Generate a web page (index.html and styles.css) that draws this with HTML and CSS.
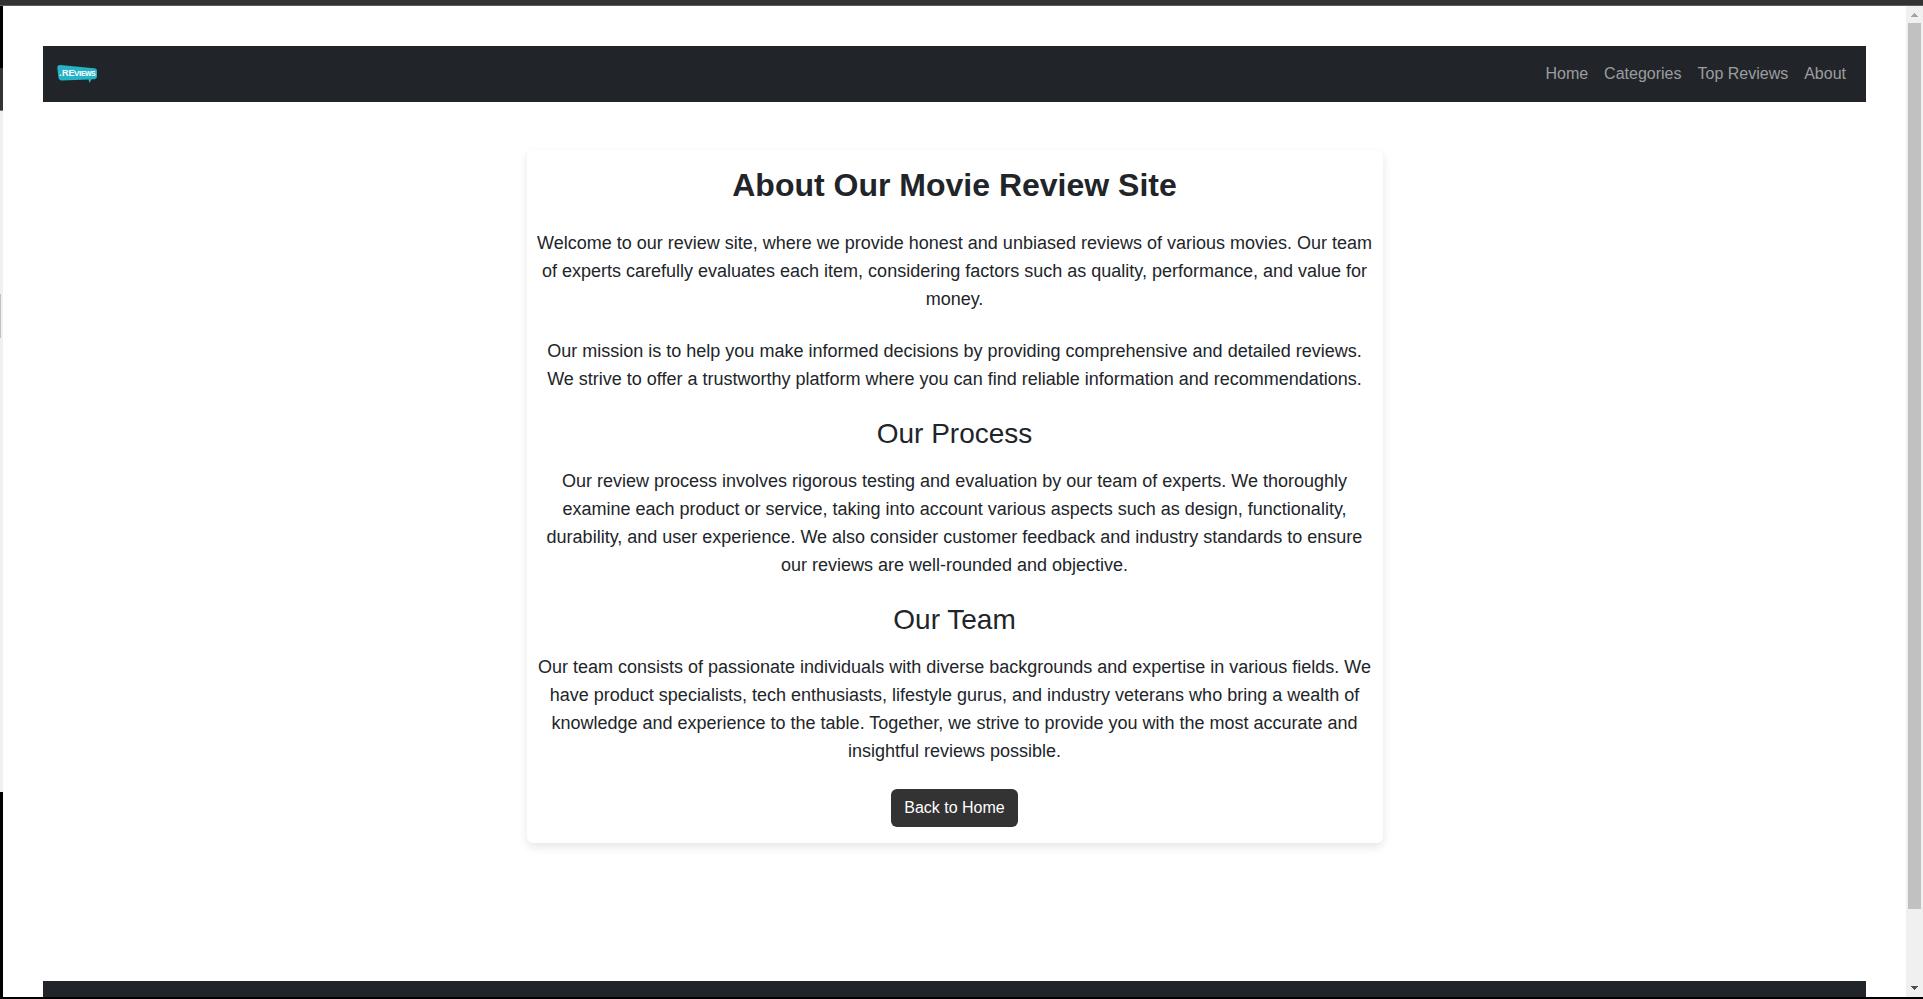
FILE: index.html
```html
<!DOCTYPE html>
<html lang="en">
<head>
<meta charset="utf-8">
<title>About - Movie Reviews</title>
<link rel="stylesheet" href="styles.css">
</head>
<body>
<div class="frame-top"></div>
<div class="window">
  <div class="frame-left"></div>
  <div class="page">
    <nav class="navbar" aria-label="Main">
      <a class="brand" href="#" aria-label="Reviews home">
        <svg width="40" height="20" viewBox="0 0 40 20" aria-hidden="true">
          <path fill="#26b3c7" d="M3 1 37 4.200Q40 4.500 40 7V12Q40 15 37 15.200L34.500 15.300 32.500 19 31.500 15.400 5 16.400Q2 16.500 1.500 13.500L.3 4Q.2 1 3 1Z"/>
          <g fill="#fff" font-family="Liberation Sans, Arial, sans-serif" font-weight="700">
            <text x="2" y="12" font-size="9">.</text>
            <text x="5" y="12" font-size="9">RE</text>
            <text x="17" y="12" font-size="8">V</text>
            <text x="22" y="12" font-size="8">I</text>
            <text x="24" y="12" font-size="7">E</text>
            <text x="28" y="12" font-size="7">W</text>
            <text x="34" y="12" font-size="7">S</text>
          </g>
        </svg>
      </a>
      <ul class="nav-links">
        <li><a href="#">Home</a></li>
        <li><a href="#">Categories</a></li>
        <li><a href="#">Top Reviews</a></li>
        <li><a href="#">About</a></li>
      </ul>
    </nav>
    <main class="card">
      <h1>About Our Movie Review Site</h1>
      <p>Welcome to our review site, where we provide honest and unbiased reviews of various movies. Our team of experts carefully evaluates each item, considering factors such as quality, performance, and value for money.</p>
      <p>Our mission is to help you make informed decisions by providing comprehensive and detailed reviews. We strive to offer a trustworthy platform where you can find reliable information and recommendations.</p>
      <h2>Our Process</h2>
      <p>Our review process involves rigorous testing and evaluation by our team of experts. We thoroughly examine each product or service, taking into account various aspects such as design, functionality, durability, and user experience. We also consider customer feedback and industry standards to ensure our reviews are well-rounded and objective.</p>
      <h2>Our Team</h2>
      <p>Our team consists of passionate individuals with diverse backgrounds and expertise in various fields. We have product specialists, tech enthusiasts, lifestyle gurus, and industry veterans who bring a wealth of knowledge and experience to the table. Together, we strive to provide you with the most accurate and insightful reviews possible.</p>
      <a class="button" href="#">Back to Home</a>
    </main>
    <footer class="footer"></footer>
  </div>
  <div class="scrollbar" aria-hidden="true">
    <svg class="arrow" width="17" height="17" viewBox="0 0 17 17" shape-rendering="crispEdges"><path fill="#a3a3a3" d="M8 7h1v1h1v1h1v1h1v1H5v-1h1V9h1V8h1z"/></svg>
    <div class="track"><div class="thumb"></div></div>
    <svg class="arrow" width="17" height="17" viewBox="0 0 17 17" shape-rendering="crispEdges"><path fill="#505050" d="M5 6h7v1h-1v1h-1v1H9v1H8V9H7V8H6V7H5z"/></svg>
  </div>
</div>
<div class="frame-bottom"></div>
</body>
</html>
```

FILE: styles.css
```css
* { box-sizing: border-box; }

body {
  margin: 0;
  height: 100vh;
  display: flex;
  flex-direction: column;
  overflow: hidden;
  font-family: "Liberation Sans", Arial, sans-serif;
  font-size: 16px;
  line-height: 24px;
  color: #212529;
  background: #fff;
}

.frame-top {
  flex: none;
  height: 6px;
  background: #333;
  border-bottom: 1px solid #5f5b5f;
}

.frame-bottom {
  flex: none;
  height: 2px;
  background: #000;
}

.window {
  flex: 1;
  min-height: 0;
  display: flex;
}

.frame-left {
  flex: none;
  width: 3px;
  background:
    linear-gradient(#c1c1c1, #c1c1c1) 0 288px / 1px 44px no-repeat,
    linear-gradient(#000 0 62px, #333 62px 104px, #777 104px 105px, #f0f0f0 105px 786px, #000 786px);
}

.page {
  flex: 1;
  min-width: 0;
  padding: 40px;
  overflow: hidden;
}

.scrollbar {
  flex: none;
  width: 17px;
  display: flex;
  flex-direction: column;
  background: #f0f0f0;
}

.arrow {
  display: block;
  flex: none;
}

.track {
  flex: 1;
  padding: 0 2px;
}

.thumb {
  height: 92.6%;
  background: #c1c1c1;
}

.navbar {
  display: flex;
  align-items: center;
  justify-content: space-between;
  min-height: 56px;
  padding: 8px 12px;
  background: #212529;
}

.brand,
.brand svg { display: block; }

.brand { padding: 0 2px; }

.nav-links {
  display: flex;
  margin: 0;
  padding: 0;
  list-style: none;
}

.nav-links a {
  display: block;
  padding: 8px;
  color: #9b9d9f;
  text-decoration: none;
}

.card {
  max-width: 856px;
  margin: 48px auto 138px;
  padding: 16px 8px;
  border-radius: 6px;
  text-align: center;
  box-shadow: 0 4px 10px rgba(0, 0, 0, .1);
}

h1 {
  margin: 0 0 24px;
  font-size: 32px;
  line-height: 39px;
}

h2 {
  margin: 0 0 16px;
  font-size: 28px;
  font-weight: 400;
  line-height: 34px;
}

p {
  margin: 0 0 24px;
  font-size: 18px;
  line-height: 28px;
}

.button {
  display: inline-block;
  padding: 7px 13px;
  border-radius: 6px;
  color: #fff;
  background: #333;
  text-decoration: none;
  vertical-align: top;
}

.footer {
  height: 56px;
  background: #212529;
}
```
